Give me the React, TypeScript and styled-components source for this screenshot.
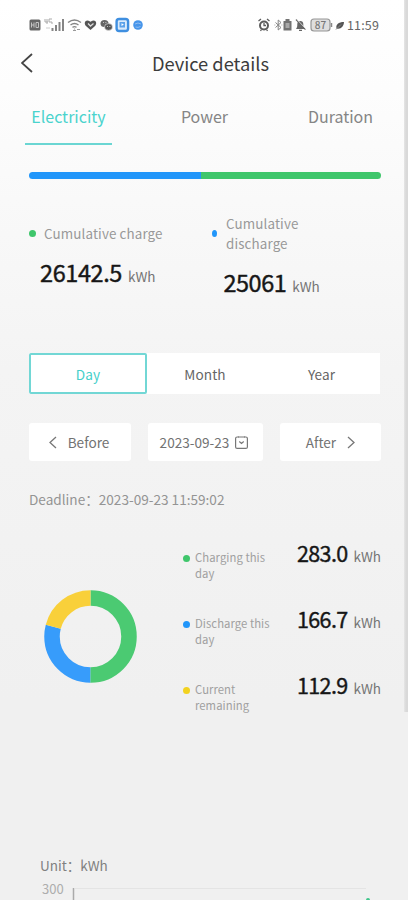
import React from "react";
import styled, { createGlobalStyle } from "styled-components";

const Global = createGlobalStyle`
  * { box-sizing: border-box; }
  html, body { margin: 0; padding: 0; overflow: hidden; }
  body { font-family: "Noto Sans CJK SC", "Noto Sans", sans-serif; background: #f0f0f0; }
  button { font-family: inherit; border: 0; padding: 0; margin: 0; background: none; }
`;

const Screen = styled.main`
  position: relative;
  width: 408px;
  height: 900px;
  overflow: hidden;
  display: flex;
  flex-direction: column;
  background: linear-gradient(#ffffff 0, #fdfdfd 90px, #f9f9f9 200px, #f4f4f4 370px, #f2f2f2 540px, #f0f0f0 700px);
`;

const ScrollTrack = styled.div`
  position: absolute;
  top: 0;
  right: 0;
  width: 4px;
  height: 712px;
  background: linear-gradient(90deg, #e6e6e6, #d9d9d9 50%);
`;

const StatusBar = styled.header`
  height: 40px;
  padding: 9px 29px 0 29px;
  display: flex;
  align-items: center;
  justify-content: space-between;
`;

const StatusTime = styled.span`
  font-size: 12.5px;
  line-height: 16px;
  color: #666;
  letter-spacing: 0.15px;
`;

const StatusEnd = styled.div`
  display: flex;
  align-items: center;
  gap: 3px;
`;

const TitleBar = styled.div`
  height: 46px;
  padding: 0 7px 0 17px;
  display: grid;
  grid-template-columns: 20px 1fr 17px;
  align-items: center;
  justify-items: center;
`;

const Title = styled.h1`
  margin: 0;
  font-size: 18.3px;
  font-weight: 400;
  line-height: 26px;
  color: #3c3c3c;
`;

const Tabs = styled.nav`
  height: 59px;
  padding: 0 24px 0 25px;
  display: flex;
  justify-content: space-between;
`;

const Tab = styled.button<{ $active?: boolean }>`
  width: 87px;
  height: 59px;
  padding-top: 2px;
  font-size: 16px;
  line-height: 57px;
  color: ${(p) => (p.$active ? "#4ad3cd" : "#858585")};
  border-bottom: 2px solid ${(p) => (p.$active ? "#6bd6d3" : "transparent")};
`;

const SplitBar = styled.div`
  display: flex;
  height: 7px;
  margin: 27px 27px 0 29px;
  border-radius: 4px;
  overflow: hidden;
`;

const Segment = styled.div<{ $color: string; $grow: number }>`
  flex: ${(p) => p.$grow} 0 0;
  background: ${(p) => p.$color};
`;

const Totals = styled.section`
  height: 174px;
  padding: 35px 27px 0 29px;
  display: grid;
  grid-template-columns: 183px 1fr;
  align-items: start;
`;

const Total = styled.div<{ $top?: number }>`
  padding-top: ${(p) => p.$top ?? 0}px;
`;

const TotalLabel = styled.div<{ $gap: number; $width: number }>`
  display: flex;
  align-items: center;
  gap: ${(p) => p.$gap}px;
  width: ${(p) => p.$width}px;
  font-size: 13.4px;
  line-height: 19.5px;
  letter-spacing: 0.12px;
  color: #999;
`;

const Dot = styled.i<{ $color: string; $size?: number; $top?: number }>`
  flex: none;
  width: ${(p) => p.$size ?? 7}px;
  height: 7px;
  margin-top: ${(p) => p.$top ?? 0}px;
  border-radius: 50%;
  background: ${(p) => p.$color};
`;

const Value = styled.div<{ $size: number; $left?: number; $top?: number; $spacing?: number }>`
  display: flex;
  align-items: baseline;
  gap: 6px;
  margin: ${(p) => p.$top ?? 0}px 0 0 ${(p) => p.$left ?? 0}px;
  font-size: ${(p) => p.$size}px;
  font-weight: 400;
  letter-spacing: ${(p) => p.$spacing ?? -0.65}px;
  line-height: 32px;
  color: #161616;
  -webkit-text-stroke: 0.4px #161616;
  white-space: nowrap;
`;

const Unit = styled.span`
  font-size: 13.5px;
  letter-spacing: 0;
  color: #757575;
  -webkit-text-stroke: 0;
`;

const Periods = styled.div`
  height: 41px;
  margin: 0 28px 0 29px;
  display: grid;
  grid-template-columns: 118px 116px 1fr;
  background: #fff;
`;

const Period = styled.button<{ $active?: boolean }>`
  padding-top: 1px;
  font-size: 13.6px;
  line-height: 36px;
  letter-spacing: 0.1px;
  color: ${(p) => (p.$active ? "#45cfca" : "#666")};
  border: 2px solid ${(p) => (p.$active ? "#72d7d5" : "transparent")};
  border-radius: 2px;
`;

const DateRow = styled.div`
  height: 38px;
  margin: 29px 27px 0 29px;
  display: grid;
  grid-template-columns: 102px 115px 101px;
  justify-content: space-between;
`;

const DateButton = styled.button<{ $gap: number; $shift?: number }>`
  display: flex;
  align-items: center;
  justify-content: center;
  gap: ${(p) => p.$gap}px;
  padding-right: ${(p) => p.$shift ?? 0}px;
  border-radius: 3px;
  background: #fff;
  color: #727272;
  font-size: 13.6px;
  line-height: 20px;
  white-space: nowrap;
`;

const Deadline = styled.p`
  margin: 28px 0 0 29px;
  font-size: 13.6px;
  line-height: 20px;
  color: #949494;
`;

const DaySummary = styled.section`
  height: 198px;
  margin-top: 31px;
  padding: 0 27px 0 44px;
  display: grid;
  grid-template-columns: 139px 1fr;
`;

const Ring = styled.svg`
  width: 93px;
  height: 93px;
  margin-top: 49.5px;
`;

const DayRow = styled.div`
  height: 66px;
  display: flex;
  justify-content: space-between;
`;

const DayLabel = styled.div`
  display: flex;
  gap: 5px;
  width: 92px;
  padding-top: 9px;
  font-size: 11.3px;
  line-height: 16px;
  letter-spacing: 0.05px;
  color: #a0a0a0;
`;

const ChartUnit = styled.div`
  margin: 117px 0 0 40px;
  font-size: 13.5px;
  line-height: 20px;
  color: #808080;
`;

const ChartTop = styled.div`
  margin-top: 3px;
  padding-left: 42px;
  display: flex;
  gap: 8px;
  font-size: 13px;
  line-height: 22px;
  color: #adadad;
`;

const blue = "#2196fa";
const green = "#3fc66b";
const yellow = "#f2d21f";

function StatusLeft() {
  return (
    <svg width="116" height="16" viewBox="29 17 116 16" fill="none">
      <rect x="29.5" y="19.5" width="11" height="11" rx="1.5" fill="#666" />
      <path d="M31.5 22.5v5M34 22.5v5M31.5 25H34M36 22.5v5M36 22.5h2.5v5H36" stroke="#c4c4c4" />
      <path d="M45 19v3h3M47 19v5M49 19h3M49 19v3h3v2" stroke="#aaa" />
      <path d="M46 28h4" stroke="#ccc" />
      <path d="M52.5 31v-3M56 31v-6M59.5 31v-9M63 31V19" stroke="#858585" strokeWidth="2" />
      <path d="M68 22.5q6.500-5 13 0M70.500 25q4-3 8 0M72.500 27.300q2-1.300 4 0" stroke="#858585" strokeWidth="1.400" />
      <path d="M74.500 28.500v1M73 30.500h3M77 29.500h3" stroke="#999" strokeWidth="1.200" />
      <path d="M90.500 30 86 26c-2-2-1.500-5.500 1.500-5.500 1.500 0 2.300.8 3 1.300.7-.5 1.500-1.300 3-1.300 3 0 3.500 3.500 1.500 5.500Z" fill="#555" />
      <path d="m88 23.500 2.500 2.500 3-2.500" stroke="#ddd" strokeWidth="1.300" />
      <ellipse cx="104.500" cy="23.500" rx="4" ry="3.500" fill="#666" />
      <ellipse cx="108.500" cy="27" rx="4" ry="3.400" fill="#555" stroke="#eee" strokeWidth=".6" />
      <path d="M103 22.500h.8M105.500 22.500h.8M107 26.500h.8M109.500 26.500h.8" stroke="#ddd" />
      <rect x="116.600" y="19" width="11.500" height="12" rx="2.500" fill="#d9eafb" stroke="#3f8fe0" strokeWidth="2.400" />
      <path d="M119.500 22h5.500v5.500h-5.500z" fill="#5ba2ea" />
      <path d="M121.500 23.200v2.800l2.400-1.400z" fill="#fff" />
      <circle cx="138" cy="25" r="4.800" fill="#4795ea" />
      <path d="M135 24q3-2 6 0M135.500 27q2.500 1 5-.5" stroke="#8fbdf2" />
    </svg>
  );
}

function StatusRight() {
  return (
    <svg width="87" height="16" viewBox="257 17 87 16" fill="none">
      <circle cx="264" cy="25.500" r="4" stroke="#5c5c5c" strokeWidth="2" />
      <path d="m258.500 21 2.500-2M269.500 21l-2.500-2M260.500 31l1-1.500M267.500 31l-1-1.500M264 23v2.500h2" stroke="#5c5c5c" strokeWidth="1.300" />
      <path d="m275.500 22.500 5.500 5-2.800 2.500V20l2.800 2.500-5.500 5" stroke="#858585" />
      <path d="M274.500 25h.8M281.500 25h.8" stroke="#999" />
      <path d="M283.500 21h2v-2h4v2h2v9.500h-8z" fill="#737373" />
      <path d="M285.500 23h4v5h-4z" fill="#a9a9a9" />
      <path d="M296 29c1.300-1.500 1.300-3 1.300-5 0-2 1.200-3 3-3s3 1 3 3c0 2 0 3.500 1.300 5Z" fill="#666" />
      <path d="M299 30.300h3M296 19.500l9.500 10" stroke="#666" strokeWidth="1.300" />
      <path d="m297 19.500 9 9.500" stroke="#fff" strokeWidth=".7" />
      <rect x="311" y="19" width="19" height="12" rx="3" fill="#dedede" stroke="#969696" strokeWidth="1.200" />
      <path d="M331.500 23v4" stroke="#888" strokeWidth="1.500" />
      <text x="320.500" y="29" textAnchor="middle" fontSize="10" fontWeight="500" fill="#777" fontFamily="Noto Sans CJK SC, sans-serif">87</text>
      <path d="M336.500 28.500c-1-4 2-6.500 7.500-6.500-.3 4.500-3 7.500-7.500 6.500Z" fill="#555" />
      <path d="m336 29.500 5-5" stroke="#888" />
    </svg>
  );
}

function Chevron({ w, h, right, stroke, color }: { w: number; h: number; right?: boolean; stroke: number; color: string }) {
  return (
    <svg width={w} height={h} viewBox={`0 0 ${w} ${h}`} fill="none">
      <path
        d={right ? `M1 1L${w - 1} ${h / 2}L1 ${h - 1}` : `M${w - 1} 1L1 ${h / 2}L${w - 1} ${h - 1}`}
        stroke={color}
        strokeWidth={stroke}
      />
    </svg>
  );
}

function CalendarIcon() {
  return (
    <svg width="13" height="13" viewBox="0 0 13 13" fill="none" stroke="#777">
      <rect x=".6" y="1" width="11.800" height="11.400" rx="1.500" strokeWidth="1.200" />
      <path d="M3.500 0v2M9.500 0v2" stroke="#999" />
      <path d="M4.300 5.500 6.500 7.500l2.200-2" strokeWidth="1.200" />
    </svg>
  );
}

const dayRows = [
  { label: "Charging this day", value: "283.0", color: green },
  { label: "Discharge this day", value: "166.7", color: blue },
  { label: "Current remaining", value: "112.9", color: yellow },
];

const ringLength = 2 * Math.PI * 38.5;
const ringParts = [
  { color: "#4bca72", start: 0, share: 0.5 },
  { color: "#379cfb", start: 0.5, share: 0.29 },
  { color: "#f9d03a", start: 0.79, share: 0.21 },
];

export default function App() {
  return (
    <Screen>
      <Global />
      <StatusBar>
        <StatusLeft />
        <StatusEnd>
          <StatusRight />
          <StatusTime>11:59</StatusTime>
        </StatusEnd>
      </StatusBar>
      <TitleBar>
        <Chevron w={12} h={20} stroke={1.8} color="#444" />
        <Title>Device details</Title>
      </TitleBar>
      <Tabs>
        <Tab $active>Electricity</Tab>
        <Tab>Power</Tab>
        <Tab>Duration</Tab>
      </Tabs>
      <SplitBar>
        <Segment $color={blue} $grow={172} />
        <Segment $color={green} $grow={180} />
      </SplitBar>
      <Totals>
        <Total $top={10}>
          <TotalLabel $gap={8} $width={150}>
            <Dot $color={green} />
            Cumulative charge
          </TotalLabel>
          <Value $size={23.5} $left={11} $top={12} $spacing={-0.4}>
            26142.5<Unit>kWh</Unit>
          </Value>
        </Total>
        <Total>
          <TotalLabel $gap={9} $width={110}>
            <Dot $color={blue} $size={5} />
            Cumulative discharge
          </TotalLabel>
          <Value $size={23.5} $left={11.5} $top={13} $spacing={-0.5}>
            25061<Unit>kWh</Unit>
          </Value>
        </Total>
      </Totals>
      <Periods>
        <Period $active>Day</Period>
        <Period>Month</Period>
        <Period>Year</Period>
      </Periods>
      <DateRow>
        <DateButton $gap={11} $shift={2}>
          <Chevron w={8} h={13} stroke={1.3} color="#777" />
          Before
        </DateButton>
        <DateButton $gap={6} $shift={3}>
          2023-09-23
          <CalendarIcon />
        </DateButton>
        <DateButton $gap={11}>
          After
          <Chevron w={8} h={13} right stroke={1.3} color="#777" />
        </DateButton>
      </DateRow>
      <Deadline>Deadline：2023-09-23 11:59:02</Deadline>
      <DaySummary>
        <Ring viewBox="0 0 93 93">
          <g transform="rotate(-90 46.5 46.5)" fill="none" strokeWidth="15.500">
            {ringParts.map((part) => (
              <circle
                key={part.color}
                cx="46.5"
                cy="46.5"
                r="38.5"
                stroke={part.color}
                strokeDasharray={`${part.share * ringLength} ${ringLength}`}
                strokeDashoffset={-part.start * ringLength}
              />
            ))}
          </g>
        </Ring>
        <div>
          {dayRows.map((row) => (
            <DayRow key={row.label}>
              <DayLabel>
                <Dot $color={row.color} $top={6} />
                {row.label}
              </DayLabel>
              <Value $size={21.5} $top={-3}>
                {row.value}
                <Unit>kWh</Unit>
              </Value>
            </DayRow>
          ))}
        </div>
      </DaySummary>
      <ChartUnit>Unit：kWh</ChartUnit>
      <ChartTop>
        300
        <svg width="300" height="22" viewBox="72 878 300 22" fill="none">
          <path d="M73.500 888v12" stroke="#aaa" strokeWidth="1.500" />
          <path d="M75 888.500h291" stroke="#e4e4e4" />
          <circle cx="368" cy="900" r="2" fill="#3fc68b" />
        </svg>
      </ChartTop>
      <ScrollTrack />
    </Screen>
  );
}
